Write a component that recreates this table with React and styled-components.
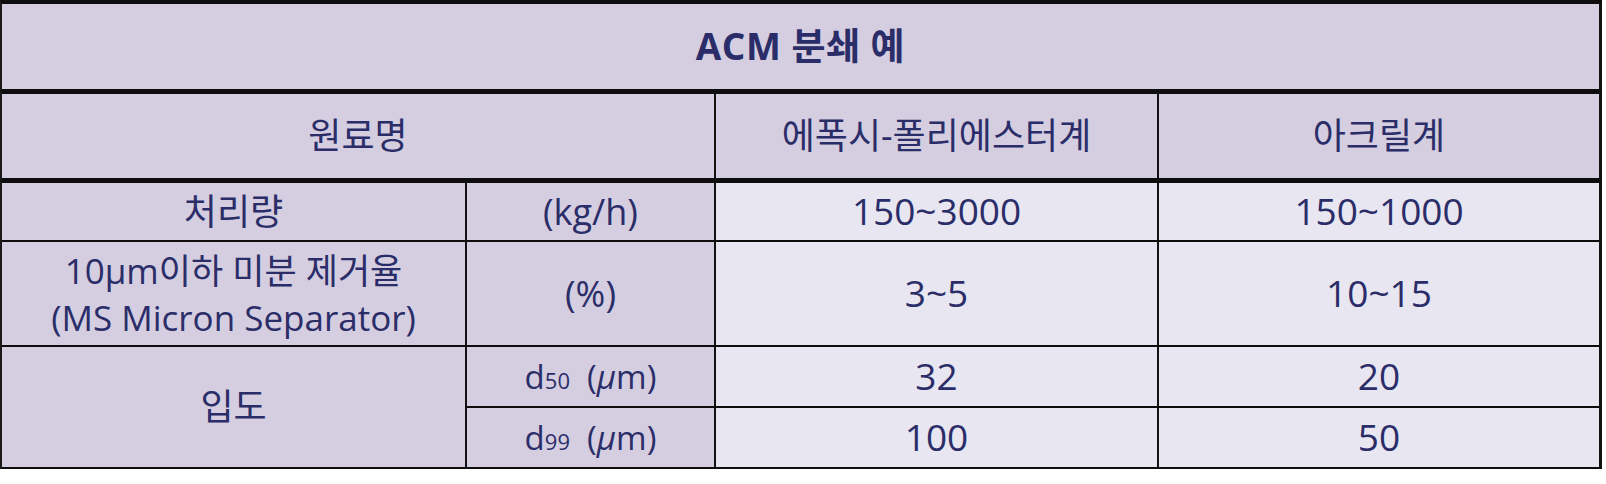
import styled, { createGlobalStyle } from 'styled-components';

const GlobalStyle = createGlobalStyle`
  html, body {
    margin: 0;
    padding: 0;
    background: #ffffff;
  }
  body {
    font-family: "Open Sans", "Noto Sans CJK KR", sans-serif;
    color: #2b2d69;
  }
`;

// 표 전체 그리드 (열 너비, 행 높이에 오른쪽/아래 선 두께 포함)
const Table = styled.div`
  display: grid;
  grid-template-columns: 465px 249px 443px 443px;
  grid-template-rows: 90px 89px 59px 105px 61px 61px;
  width: 1602px;
  box-sizing: border-box;
  border-top: 4px solid #0d0d0d;
  border-left: 2px solid #1a1a1a;
`;

const Cell = styled.div`
  box-sizing: border-box;
  display: flex;
  flex-direction: column;
  align-items: center;
  justify-content: center;
  text-align: center;
  grid-column: ${({ $col = 'auto' }) => $col};
  grid-row: ${({ $row = 'auto' }) => $row};
  background: ${({ $data }) => ($data ? '#e8e6f0' : '#d4cee0')};
  border-right: ${({ $edge }) => ($edge ? '3px' : '2px')} solid #121212;
  border-bottom: ${({ $thick }) => ($thick ? '5px' : '2px')} solid #0d0d0d;
  font-size: ${({ $size = 36 }) => $size}px;
  line-height: 1.2;
  white-space: pre;
`;

const Title = styled.span`
  font-weight: 700;
  font-size: 37px;
  letter-spacing: 0.5px;
`;

const Line = styled.div`
  font-size: 35px;
  line-height: 47px;
`;

const Sub = styled.span`
  font-size: 22px;
`;

const Mu = styled.span`
  font-style: italic;
`;

// d50 (μm), d99 (μm)
const Size = ({ n }) => (
  <span>
    d<Sub>{n}</Sub>
    {'  ('}
    <Mu>μ</Mu>
    {'m)'}
  </span>
);

const rows = [
  { label: '처리량', unit: '(kg/h)', a: '150~3000', b: '150~1000', row: '3' },
  { label: null, unit: '(%)', a: '3~5', b: '10~15', row: '4' },
];

const App = () => (
  <>
    <GlobalStyle />
    <Table>
      <Cell $col="1 / span 4" $thick $edge>
        <Title>ACM 분쇄 예</Title>
      </Cell>

      <Cell $col="1 / span 2" $thick>원료명</Cell>
      <Cell $thick>에폭시-폴리에스터계</Cell>
      <Cell $thick $edge>아크릴계</Cell>

      {rows.map((r) => [
        <Cell key={r.row + 'l'} $row={r.row} $col="1">
          {r.label ? (
            r.label
          ) : (
            <>
              <Line>10μm이하 미분 제거율</Line>
              <Line>(MS Micron Separator)</Line>
            </>
          )}
        </Cell>,
        <Cell key={r.row + 'u'} $row={r.row} $col="2">{r.unit}</Cell>,
        <Cell key={r.row + 'a'} $row={r.row} $col="3" $data $size={37}>{r.a}</Cell>,
        <Cell key={r.row + 'b'} $row={r.row} $col="4" $data $edge $size={37}>{r.b}</Cell>,
      ])}

      <Cell $col="1" $row="5 / span 2">입도</Cell>
      <Cell $col="2" $row="5" $size={33}>
        <Size n="50" />
      </Cell>
      <Cell $col="3" $row="5" $data $size={37}>32</Cell>
      <Cell $col="4" $row="5" $data $edge $size={37}>20</Cell>

      <Cell $col="2" $row="6" $size={33}>
        <Size n="99" />
      </Cell>
      <Cell $col="3" $row="6" $data $size={37}>100</Cell>
      <Cell $col="4" $row="6" $data $edge $size={37}>50</Cell>
    </Table>
  </>
);

export default App;
